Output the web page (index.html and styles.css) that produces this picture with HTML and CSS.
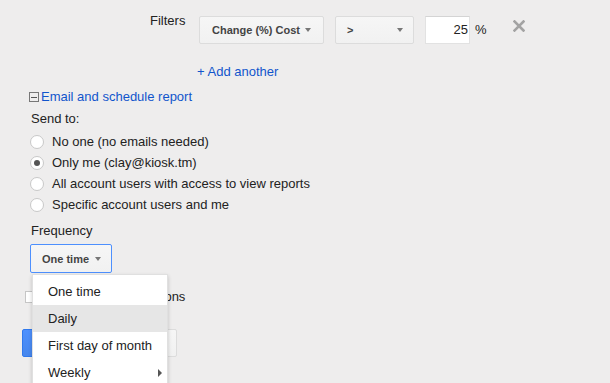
FILE: index.html
```html
<!DOCTYPE html>
<html>
<head>
<meta charset="utf-8">
<link rel="stylesheet" href="styles.css">
</head>
<body>
<div class="page">
  <div class="filters">
    <div class="filters-label">Filters</div>
    <div class="dd dd-metric"><span>Change (%) Cost</span><i class="caret"></i></div>
    <div class="dd dd-op"><span>&gt;</span><i class="caret"></i></div>
    <div class="num-input">25</div>
    <div class="pct">%</div>
    <div class="remove">
      <svg width="12" height="12" viewBox="0 0 12 12"><path d="M1.5 1.5 L10.5 10.5 M10.5 1.5 L1.5 10.5" stroke="#a3a3a3" stroke-width="2.6" stroke-linecap="square"/></svg>
    </div>
  </div>
  <div class="add-another">+ Add another</div>

  <div class="section">
    <div class="section-head"><span class="collapse-box"><span class="minus"></span></span><span class="link">Email and schedule report</span></div>
    <div class="label send-to">Send to:</div>
    <div class="radios">
      <div class="radio-row"><span class="radio"></span>No one (no emails needed)</div>
      <div class="radio-row"><span class="radio checked"></span>Only me (clay@kiosk.tm)</div>
      <div class="radio-row"><span class="radio"></span>All account users with access to view reports</div>
      <div class="radio-row"><span class="radio"></span>Specific account users and me</div>
    </div>
    <div class="label freq">Frequency</div>
    <div class="freq-wrap">
      <div class="dd dd-freq"><span>One time</span><i class="caret"></i></div>
      <div class="menu">
        <div class="menu-item">One time</div>
        <div class="menu-item hover">Daily</div>
        <div class="menu-item">First day of month</div>
        <div class="menu-item has-sub">Weekly<i class="sub-arrow"></i></div>
      </div>
    </div>
    <div class="check-row"><span class="checkbox"></span><span class="check-text">Include new conversions</span></div>
    <div class="buttons">
      <div class="btn btn-primary"></div>
      <div class="btn btn-plain"></div>
    </div>
  </div>
</div>
</body>
</html>
```

FILE: styles.css
```css
html, body {
  margin: 0;
  padding: 0;
  background: #eeeded;
}
body {
  font-family: "Liberation Sans", Arial, sans-serif;
  font-size: 13px;
  line-height: 16px;
  color: #222;
  width: 610px;
  height: 383px;
  overflow: hidden;
}
.page {
  padding-top: 13px;
}
.filters {
  display: flex;
  align-items: flex-start;
  padding-left: 150px;
}
.filters-label {
  width: 49px;
}
.dd {
  box-sizing: border-box;
  height: 28px;
  margin-top: 3px;
  border: 1px solid #dcdcdc;
  border-radius: 2px;
  background: linear-gradient(#f6f6f6, #f1f1f1);
  font-weight: bold;
  font-size: 11px;
  color: #444;
  display: flex;
  align-items: center;
  justify-content: space-between;
}
.caret {
  display: block;
  width: 0;
  height: 0;
  border-left: 3.5px solid transparent;
  border-right: 3.5px solid transparent;
  border-top: 4px solid #777;
}
.dd-metric {
  width: 125px;
  padding: 0 12px 0 12px;
}
.dd-op {
  width: 79px;
  margin-left: 11px;
  padding: 0 10px 0 11px;
}
.num-input {
  box-sizing: border-box;
  width: 45px;
  height: 28px;
  margin-top: 3px;
  margin-left: 11px;
  background: #fff;
  border: 1px solid #e2e2e2;
  border-top-color: #d4d4d4;
  text-align: right;
  line-height: 26px;
  padding-right: 1px;
  color: #222;
}
.pct {
  margin-left: 5px;
  margin-top: 9px;
}
.remove {
  margin-left: 26px;
  margin-top: 7px;
  width: 12px;
  height: 12px;
}
.remove svg {
  display: block;
}
.add-another {
  margin-top: 20px;
  margin-left: 197px;
  color: #15c;
}
.section {
  padding-left: 29px;
}
.section-head {
  margin-top: 9px;
  display: flex;
  align-items: center;
}
.collapse-box {
  box-sizing: border-box;
  width: 10px;
  height: 10px;
  border: 1px solid #777;
  margin-right: 2px;
  display: flex;
  align-items: center;
  justify-content: center;
}
.minus {
  display: block;
  width: 6px;
  height: 1px;
  background: #555;
}
.link {
  color: #15c;
}
.label {
  margin-left: 2px;
}
.send-to {
  margin-top: 6px;
}
.radios {
  margin-top: 4px;
}
.radio-row {
  height: 21px;
  line-height: 21px;
  display: flex;
  align-items: center;
}
.radio {
  box-sizing: border-box;
  width: 14px;
  height: 14px;
  margin-left: 1px;
  margin-right: 8px;
  border-radius: 50%;
  border: 1px solid #c8c8c8;
  background: #fff;
  display: flex;
  align-items: center;
  justify-content: center;
}
.radio.checked::after {
  content: "";
  display: block;
  width: 6px;
  height: 6px;
  border-radius: 50%;
  background: #555;
}
.freq {
  margin-top: 8px;
}
.freq-wrap {
  position: relative;
  margin-top: 5px;
  margin-left: 1px;
  height: 30px;
}
.dd-freq {
  width: 82px;
  height: 29px;
  margin-top: 0;
  border: 1px solid #4d90fe;
  padding: 0 10px 0 11px;
}
.menu {
  position: absolute;
  left: 2px;
  top: 30px;
  width: 136px;
  padding-top: 3px;
  padding-bottom: 6px;
  background: #fff;
  border: 1px solid rgba(0, 0, 0, 0.12);
  box-sizing: border-box;
  box-shadow: 0 2px 4px rgba(0, 0, 0, 0.2);
  z-index: 5;
}
.menu-item {
  position: relative;
  height: 27px;
  line-height: 27px;
  padding-left: 15px;
  color: #222;
}
.menu-item.hover {
  background: #e6e6e6;
}
.sub-arrow {
  position: absolute;
  right: 5px;
  top: 10px;
  width: 0;
  height: 0;
  border-top: 4px solid transparent;
  border-bottom: 4px solid transparent;
  border-left: 4px solid #555;
}
.check-row {
  margin-top: 15px;
  margin-left: -4px;
  display: flex;
  align-items: center;
  height: 16px;
  white-space: nowrap;
}
.checkbox {
  box-sizing: border-box;
  width: 12px;
  height: 12px;
  margin-right: 6px;
  background: #fff;
  border: 1px solid #c6c6c6;
}
.buttons {
  margin-top: 24px;
  margin-left: -7px;
  display: flex;
  gap: 8px;
}
.btn {
  box-sizing: border-box;
  height: 28px;
  border-radius: 2px;
}
.btn-primary {
  width: 70px;
  background: linear-gradient(#4d90fe, #4787ed);
  border: 1px solid #3079ed;
}
.btn-plain {
  width: 77px;
  background: linear-gradient(#f6f6f6, #f1f1f1);
  border: 1px solid #dcdcdc;
}
```
